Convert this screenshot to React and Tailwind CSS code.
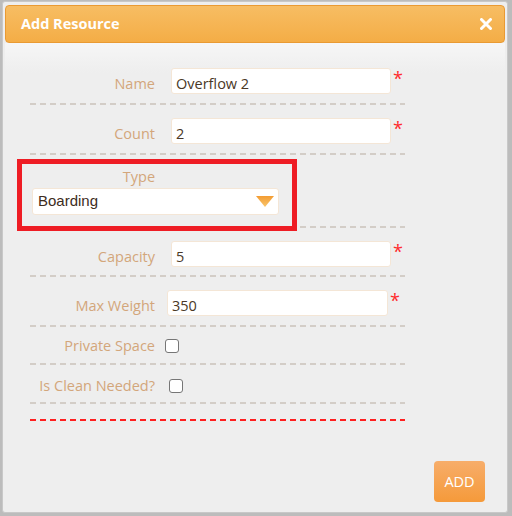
const font = { fontFamily: '"Open Sans", "Noto Sans", sans-serif' };

function Dash({ red, className = "" }) {
  return (
    <div
      className={`h-[2px] w-[375px] ${
        red
          ? "bg-[repeating-linear-gradient(90deg,#ff1f1f_0px,#ff1f1f_6px,transparent_6px,transparent_10px)]"
          : "bg-[repeating-linear-gradient(90deg,#d3cdc7_0px,#d3cdc7_6px,transparent_6px,transparent_10px)]"
      } ${className}`}
    />
  );
}

function InputRow({ label, value, inputClass = "ml-[16px] w-[220px]", className = "" }) {
  return (
    <div className={`flex items-start h-[26px] ${className}`}>
      <label className="w-[125px] shrink-0 text-right pt-[6px] leading-[20px] text-[#d3a67b]">
        {label}
      </label>
      <div
        className={`${inputClass} h-[26px] shrink-0 bg-white border border-[#f4e6d6] rounded-[3px] pl-[4px] pt-[5px] leading-[20px] text-[#4a3826]`}
      >
        {value}
      </div>
      <span className="ml-[2px] mt-[1px] text-[18px] leading-none text-[#ff2b2b]">*</span>
    </div>
  );
}

function CheckRow({ label, boxClass, className = "" }) {
  return (
    <div className={`flex items-start h-[20px] ${className}`}>
      <label className="w-[125px] shrink-0 text-right leading-[20px] text-[#d3a67b]">
        {label}
      </label>
      <div
        className={`${boxClass} mt-[3px] w-[14px] h-[14px] shrink-0 bg-white border border-[#767676] rounded-[3px]`}
      />
    </div>
  );
}

export default function App() {
  return (
    <div className="w-[512px] h-[516px] bg-[#bcbcbc] pl-[2px] pt-[1px] overflow-hidden" style={font}>
      <div className="w-[506px] h-[512px] bg-[#eeeeee] border border-[#c8c8c8] rounded-[3px] px-[2px] pt-[3px] flex flex-col text-[14.5px]">
        <header className="h-[38px] shrink-0 flex items-center justify-between rounded-[4px] border border-[#e99a33] bg-[linear-gradient(#f7bd63,#f4ad46)] pl-[15px] pr-[12px]">
          <h1 className="font-bold text-white text-[14.5px] leading-none">Add Resource</h1>
          <svg width="12" height="12" viewBox="0 0 12 12">
            <path d="M1.5 1.5 L10.5 10.5 M10.5 1.5 L1.5 10.5" stroke="#ffffff" strokeWidth="3" strokeLinecap="round" />
          </svg>
        </header>

        <div className="relative flex-1 flex flex-col pl-[25px] bg-[linear-gradient(#f6f6f6,#eeeeee_30px)]">
          <InputRow label="Name" value="Overflow 2" className="mt-[25px]" />
          <Dash className="mt-[9px]" />
          <InputRow label="Count" value="2" className="mt-[13px]" />
          <Dash className="mt-[9px]" />

          <div className="mt-[12px] w-[218px] text-center leading-[20px] text-[#d3a67b]">Type</div>
          <div className="mt-[1px] ml-[2px] w-[247px] h-[27px] flex items-center justify-between bg-white border border-[#f4e6d6] rounded-[3px] pl-[5px] pr-[4px]">
            <span
              className="text-[15px] text-[#3d2c1c]"
              style={{ fontFamily: '"Liberation Sans", Arial, sans-serif' }}
            >
              Boarding
            </span>
            <svg width="18" height="11" viewBox="0 0 18 11">
              <defs>
                <linearGradient id="tri" x1="0" y1="0" x2="0" y2="1">
                  <stop offset="0" stopColor="#f39c32" />
                  <stop offset="1" stopColor="#f8c56c" />
                </linearGradient>
              </defs>
              <polygon points="0,0 18,0 9,11" fill="url(#tri)" />
            </svg>
          </div>
          <Dash className="mt-[11px]" />

          <InputRow label="Capacity" value="5" className="mt-[13px]" />
          <Dash className="mt-[8px]" />
          <InputRow
            label="Max Weight"
            value="350"
            inputClass="ml-[12px] w-[221px]"
            className="mt-[13px]"
          />
          <Dash className="mt-[9px]" />
          <CheckRow label="Private Space" boxClass="ml-[10px]" className="mt-[9px]" />
          <Dash className="mt-[7px]" />
          <CheckRow label="Is Clean Needed?" boxClass="ml-[14px]" className="mt-[11px]" />
          <Dash className="mt-[6px]" />
          <Dash red className="mt-[15px]" />

          <div className="mt-[40px] flex justify-end pr-[20px]">
            <button className="w-[51px] h-[41px] rounded-[4px] bg-[linear-gradient(#f7ad6a,#f59a3a)] text-white text-[14.5px]">
              ADD
            </button>
          </div>

          <div className="absolute left-[12px] top-[116px] w-[280px] h-[72px] border-[5px] border-[#ee1c24]" />
        </div>
      </div>
    </div>
  );
}
